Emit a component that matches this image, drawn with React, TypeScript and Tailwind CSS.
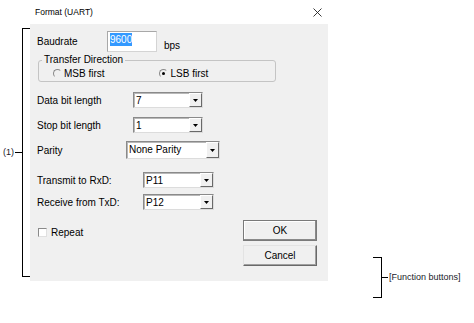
import type { ReactNode } from 'react'

function Arrow() {
  return (
    <svg width="5" height="3" viewBox="0 0 5 3">
      <polygon points="0,0 5,0 2.5,3" fill="#000" />
    </svg>
  )
}

function Combo({ value, w, h }: { value: string; w: string; h: string }) {
  return (
    <div
      className={`flex ${w} ${h} border border-t-[#8a8a8a] border-l-[#8a8a8a] border-r-[#dcdcdc] border-b-[#dcdcdc] bg-white shadow-[inset_1px_1px_0_#b8b8b8]`}
    >
      <div className="flex-1 pl-[2px] leading-[13px] pt-[1px]">{value}</div>
      <div className="flex w-[13px] items-center justify-center border border-t-white border-l-white border-r-[#696969] border-b-[#696969] bg-[#f0f0f0]">
        <Arrow />
      </div>
    </div>
  )
}

function Row({ label, lw, mt, children }: { label: string; lw: string; mt: string; children: ReactNode }) {
  return (
    <div className={`flex items-center pl-[7px] ${mt}`}>
      <div className={lw}>{label}</div>
      {children}
    </div>
  )
}

function Radio({ checked }: { checked?: boolean }) {
  return (
    <div className="flex h-[9px] w-[9px] items-center justify-center rounded-full border border-t-[#8a8a8a] border-l-[#8a8a8a] border-r-[#f0f0f0] border-b-[#f0f0f0] bg-[#f0f0f0]">
      {checked && <div className="h-[3px] w-[3px] rounded-full bg-black" />}
    </div>
  )
}

function PushButton({ label, def }: { label: string; def?: boolean }) {
  return (
    <button
      className={`h-[21px] w-[74px] border bg-[#f0f0f0] text-[10px] text-black ${
        def
          ? 'border-[#7a7a7a] shadow-[inset_-1px_-1px_0_#8a8a8a,inset_1px_1px_0_#fff]'
          : 'border-t-[#e3e3e3] border-l-[#e3e3e3] border-r-[#696969] border-b-[#696969] shadow-[inset_-1px_-1px_0_#a0a0a0]'
      }`}
    >
      {label}
    </button>
  )
}

export default function App() {
  return (
    <div className="flex h-[323px] w-[474px] bg-white font-['Liberation_Sans',Arial,sans-serif] text-[10px] text-black">
      {/* (1) bracket */}
      <div className="w-[30px] pt-[28px]">
        <div className="flex h-[249px] items-center">
          <div className="flex w-[15px] justify-end pr-[1px] text-[9px] text-[#1a1a2a]">(1)</div>
          <div className="h-px w-[7px] bg-black" />
          <div className="h-full w-[8px] border-y border-l border-black" />
        </div>
      </div>

      {/* dialog */}
      <div className="w-[298px]">
        <div className="flex h-[24px] items-center justify-between pl-[5px] pr-[6px]">
          <span className="text-[8.5px]">Format (UART)</span>
          <svg width="9" height="9" viewBox="0 0 9 9">
            <path d="M0.5 0.5 L8.5 8.5 M8.5 0.5 L0.5 8.5" stroke="#222" strokeWidth="0.9" />
          </svg>
        </div>
        <div className="flex h-[257px] flex-col bg-[#f0f0f0]">
          <div className="mt-[7px] flex h-[21px] items-center pl-[7px]">
            <div className="w-[70px]">Baudrate</div>
            <div className="flex h-[21px] w-[50px] border border-[#a8a8a8] border-r-[#d4d4d4] border-b-[#d4d4d4] bg-white pl-[2px] pt-[1px]">
              <span className="h-[13px] bg-[#3399ff] leading-[13px] text-white">9600</span>
            </div>
            <span className="ml-[7px] self-end leading-[12px]">bps</span>
          </div>

          <fieldset className="ml-[8px] mt-[2px] w-[238px] rounded-[3px] border border-[#c4c4c4]">
            <legend className="ml-[3px] px-[2px] leading-[12px]">Transfer Direction</legend>
            <div className="flex h-[15px] items-center">
              <div className="ml-[14px] flex items-center gap-[2px]">
                <Radio />
                <span>MSB first</span>
              </div>
              <div className="ml-[54px] flex items-center gap-[3px]">
                <Radio checked />
                <span>LSB first</span>
              </div>
            </div>
          </fieldset>

          <Row label="Data bit length" lw="w-[96px]" mt="mt-[10px]">
            <Combo value="7" w="w-[70px]" h="h-[16px]" />
          </Row>
          <Row label="Stop bit length" lw="w-[96px]" mt="mt-[9px]">
            <Combo value="1" w="w-[70px]" h="h-[16px]" />
          </Row>
          <Row label="Parity" lw="w-[89px]" mt="mt-[8px]">
            <Combo value="None Parity" w="w-[94px]" h="h-[18px]" />
          </Row>
          <Row label="Transmit to RxD:" lw="w-[106px]" mt="mt-[13px]">
            <Combo value="P11" w="w-[71px]" h="h-[16px]" />
          </Row>
          <Row label="Receive from TxD:" lw="w-[106px]" mt="mt-[6px]">
            <Combo value="P12" w="w-[71px]" h="h-[16px]" />
          </Row>

          <div className="mt-[10px] flex">
            <div className="ml-[8px] mt-[7px] flex h-[10px] items-center gap-[4px]">
              <div className="h-[9px] w-[9px] border border-t-[#8a8a8a] border-l-[#8a8a8a] border-r-[#e0e0e0] border-b-[#e0e0e0] bg-white" />
              <span>Repeat</span>
            </div>
            <div className="ml-auto mr-[11px] flex flex-col gap-[4px]">
              <PushButton label="OK" def />
              <PushButton label="Cancel" />
            </div>
          </div>
        </div>
      </div>

      {/* function buttons bracket */}
      <div className="flex-1 pl-[45px] pt-[257px]">
        <div className="flex h-[41px] items-center">
          <div className="h-full w-[9px] border-y border-r border-black" />
          <div className="h-px w-[6px] bg-black" />
          <span className="ml-px text-[9px] text-[#1a1a2a]">[Function buttons]</span>
        </div>
      </div>
    </div>
  )
}
